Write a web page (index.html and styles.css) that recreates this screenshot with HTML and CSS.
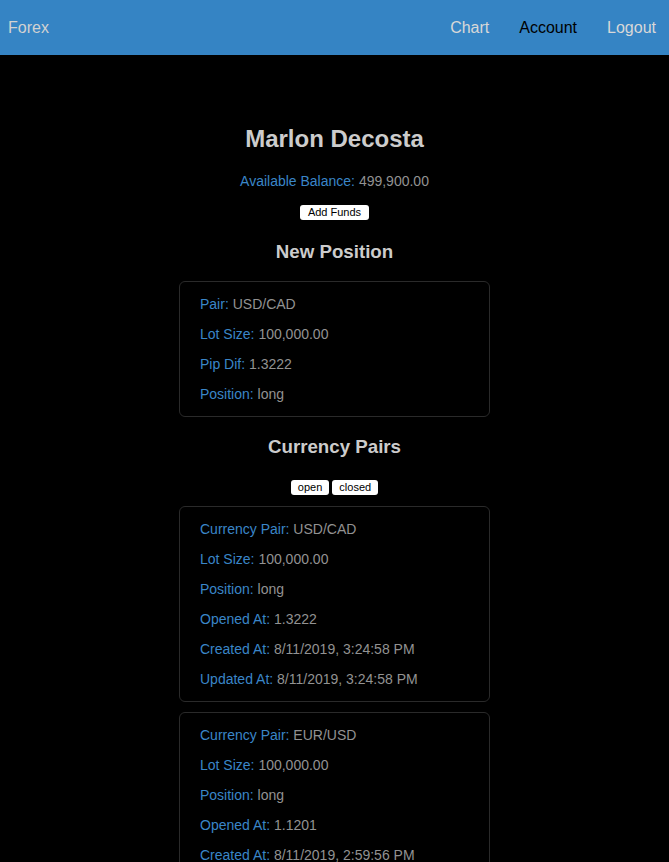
FILE: index.html
```html
<!DOCTYPE html>
<html>
<head>
<meta charset="utf-8">
<link rel="stylesheet" href="styles.css">
</head>
<body>
<nav class="nav">
  <a class="brand">Forex</a>
  <div class="links">
    <a class="link">Chart</a>
    <a class="link active">Account</a>
    <a class="link">Logout</a>
  </div>
</nav>
<main class="main">
  <h2 class="name">Marlon Decosta</h2>
  <p class="balance"><span class="label">Available Balance:</span> <span class="value">499,900.00</span></p>
  <div class="btnrow first"><button class="btn">Add Funds</button></div>
  <h3 class="section new">New Position</h3>
  <div class="card">
    <p class="row"><span class="label">Pair:</span> <span class="value">USD/CAD</span></p>
    <p class="row"><span class="label">Lot Size:</span> <span class="value">100,000.00</span></p>
    <p class="row"><span class="label">Pip Dif:</span> <span class="value">1.3222</span></p>
    <p class="row"><span class="label">Position:</span> <span class="value">long</span></p>
  </div>
  <h3 class="section pairs">Currency Pairs</h3>
  <div class="btnrow toggles"><button class="btn">open</button> <button class="btn">closed</button></div>
  <div class="card pair">
    <p class="row"><span class="label">Currency Pair:</span> <span class="value">USD/CAD</span></p>
    <p class="row"><span class="label">Lot Size:</span> <span class="value">100,000.00</span></p>
    <p class="row"><span class="label">Position:</span> <span class="value">long</span></p>
    <p class="row"><span class="label">Opened At:</span> <span class="value">1.3222</span></p>
    <p class="row"><span class="label">Created At:</span> <span class="value">8/11/2019, 3:24:58 PM</span></p>
    <p class="row"><span class="label">Updated At:</span> <span class="value">8/11/2019, 3:24:58 PM</span></p>
  </div>
  <div class="card pair">
    <p class="row"><span class="label">Currency Pair:</span> <span class="value">EUR/USD</span></p>
    <p class="row"><span class="label">Lot Size:</span> <span class="value">100,000.00</span></p>
    <p class="row"><span class="label">Position:</span> <span class="value">long</span></p>
    <p class="row"><span class="label">Opened At:</span> <span class="value">1.1201</span></p>
    <p class="row"><span class="label">Created At:</span> <span class="value">8/11/2019, 2:59:56 PM</span></p>
    <p class="row"><span class="label">Updated At:</span> <span class="value">8/11/2019, 2:59:56 PM</span></p>
  </div>
</main>
</body>
</html>
```
FILE: styles.css
```css
html, body {
  margin: 0;
  padding: 0;
  background: #000;
  font-family: "Liberation Sans", Arial, sans-serif;
}
.nav {
  height: 55px;
  background: #3584c4;
  display: flex;
  align-items: center;
  justify-content: space-between;
  padding: 0 13px 0 8px;
  font-size: 16px;
}
.brand {
  color: #d2d2d2;
}
.links {
  display: flex;
  gap: 30px;
}
.link {
  color: #d8d8d8;
}
.link.active {
  color: #000;
}
.main {
  display: flex;
  flex-direction: column;
  align-items: center;
  padding-top: 50px;
  color: #cccccc;
}
.name {
  font-size: 24px;
  font-weight: bold;
  margin: 20px 0 20px;
  color: #cccccc;
}
.balance {
  font-size: 14px;
  margin: 0;
  line-height: 16px;
}
.label {
  color: #3a86c8;
}
.value {
  color: #929292;
}
.btnrow {
  display: flex;
  gap: 3px;
}
.btnrow.first {
  margin-top: 16px;
}
.btn {
  font-family: "Liberation Sans", Arial, sans-serif;
  font-size: 11px;
  line-height: 13px;
  height: 15px;
  background: #fff;
  color: #000;
  border: none;
  border-radius: 3px;
  padding: 1px 8px;
  margin: 0;
}
.section {
  font-size: 18.72px;
  font-weight: bold;
  color: #cccccc;
}
.section.new {
  margin: 21px 0 18px;
}
.section.pairs {
  margin: 19px 0 19px;
}
.toggles {
  margin-top: 3px;
  margin-bottom: 11px;
}
.toggles .btn {
  padding: 1px 7px;
}
.card {
  width: 311px;
  box-sizing: border-box;
  border: 1px solid #2a2a2a;
  border-radius: 6px;
  padding: 0 20px;
}
.card.pair {
  margin-bottom: 10px;
}
.row {
  font-size: 14px;
  line-height: 16px;
  margin: 14px 0;
}
```
